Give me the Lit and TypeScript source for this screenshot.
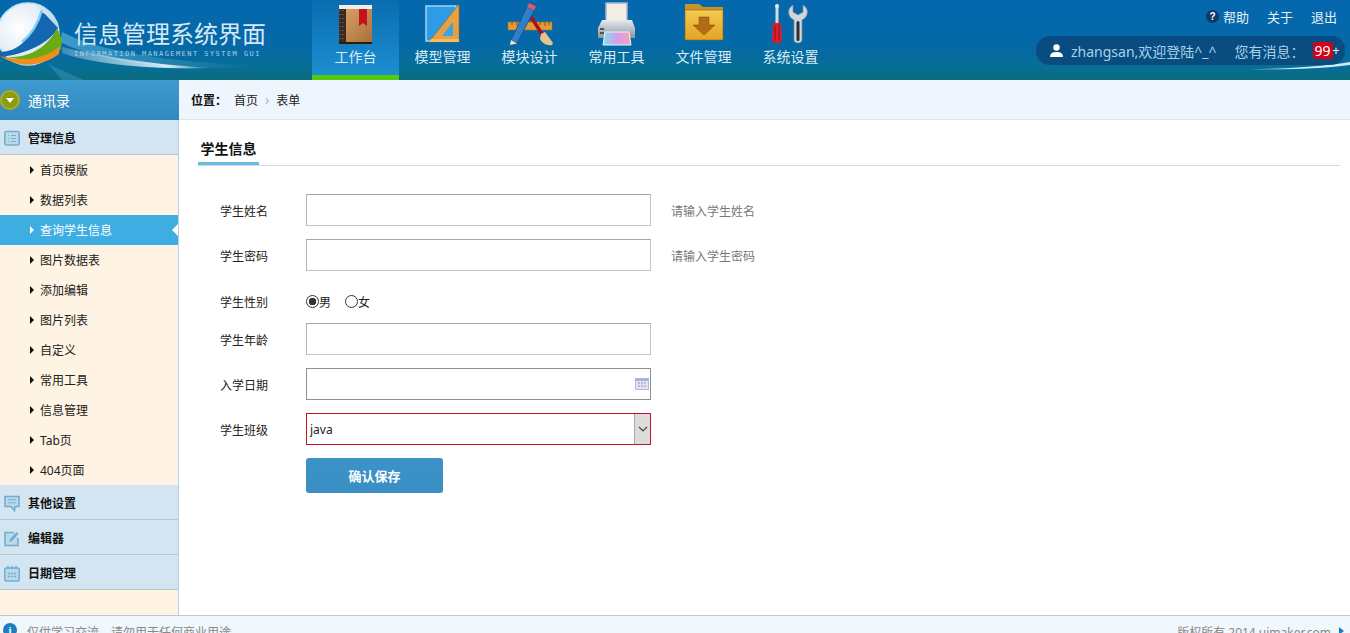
import { LitElement, html, css, svg } from "lit";
import { customElement } from "lit/decorators.js";

const navIcons = [
  svg`<svg viewBox="0 0 40 44" width="40" height="44"><defs><linearGradient id="bk" x1="0" x2="1" y1="0" y2="1"><stop offset="0" stop-color="#e0a86c"/><stop offset="1" stop-color="#a96f3a"/></linearGradient></defs><rect x="3" y="3" width="33" height="37" fill="url(#bk)"/><rect x="3" y="4" width="7" height="37" fill="#3a2a20"/><path d="M4 8v30M7 8v30" stroke="#8a7560" stroke-dasharray="1 3"/><rect x="3" y="3" width="33" height="4" fill="#f3efe8"/><path d="M23 7h8v17l-4-3-4 3z" fill="#c1121f"/><rect x="3" y="40" width="33" height="2" fill="#2b1c12"/></svg>`,
  svg`<svg viewBox="0 0 40 44" width="40" height="44"><rect x="3" y="4" width="30" height="35" fill="#2e9be6" stroke="#9fd5f5" stroke-width="1.500"/><path d="M36 2v38H6z" fill="#e7a13f" stroke="#8f6a2a" stroke-width=".6"/><path d="M30 20v14H19z" fill="#39a3e8"/><path d="M36 40H6l2-3h28z" fill="#f3bd62"/></svg>`,
  svg`<svg viewBox="0 0 48 44" width="48" height="44"><rect x="2" y="20" width="44" height="8" fill="#e39a36" stroke="#a76f22" stroke-width=".6"/><path d="M6 20v3M11 20v4M16 20v3M34 20v3M39 20v4M43 20v3" stroke="#7a5216"/><path d="M25 7 47 7" stroke="none"/><path d="M25 15l13 20" stroke="#a8101b" stroke-width="3.500"/><path d="M35 32l4-2 8 11-1 2c-5 1-10-2-12-6z" fill="#e7c48d"/><path d="M5 38 21 5l7 3.500-17 33z" fill="#2f80c8" stroke="#15507f" stroke-width=".8"/><path d="M21 5l2-4 7 3.500-2 4z" fill="#e2596d"/><path d="M5 38l-1 5 7-1.500z" fill="#f2e3c8"/></svg>`,
  svg`<svg viewBox="0 0 44 44" width="44" height="44"><defs><linearGradient id="pr"><stop offset="0" stop-color="#7fe3e8"/><stop offset=".5" stop-color="#d79cf0"/><stop offset="1" stop-color="#f5a5b0"/></linearGradient><linearGradient id="pb" x1="0" x2="0" y1="0" y2="1"><stop offset="0" stop-color="#e7eaee"/><stop offset=".55" stop-color="#b4bac2"/><stop offset="1" stop-color="#8d949e"/></linearGradient></defs><rect x="11" y="1" width="21" height="20" fill="#f4ede4" stroke="#aab4c2" stroke-width="1.500"/><path d="M7 18h30l3 8v10H3V26z" fill="url(#pb)"/><rect x="5" y="26" width="4" height="2" fill="#555"/><rect x="5" y="30" width="4" height="2" fill="#555"/><path d="M10 30h24l2 13H8z" fill="url(#pr)" stroke="#e6f6fb"/></svg>`,
  svg`<svg viewBox="0 0 42 40" width="42" height="40"><defs><linearGradient id="fd" x1="0" x2="0" y1="0" y2="1"><stop offset="0" stop-color="#f4c94f"/><stop offset="1" stop-color="#e2a423"/></linearGradient></defs><path d="M2 2h14l4 3h20v33H2z" fill="#c99427"/><rect x="2" y="8" width="38" height="30" fill="url(#fd)" stroke="#8a6518" stroke-width=".6"/><path d="M16 15h10v8h6L21 33 10 23h6z" fill="#b56a17" stroke="#7d4a10" stroke-width=".5"/></svg>`,
  svg`<svg viewBox="0 0 40 44" width="40" height="44"><rect x="4.500" y="4" width="3" height="17" fill="#d5dade"/><circle cx="6" cy="4" r="2" fill="#e6ebef"/><path d="M2 21h8l1 18-2 2H3l-2-2z" fill="#d9202c"/><path d="M4 23v16M8 23v16" stroke="#8e0f17"/><path d="M22 3c-6 3-6 12 1 15v20c0 4 8 4 8 0V18c7-3 7-12 1-15v7l-5 3-5-3z" fill="#cfd6dc" stroke="#7c8790" stroke-width=".7"/><rect x="25.500" y="19" width="3" height="20" rx="1.500" fill="#2d2f33"/></svg>`,
];
const navLabels = ["工作台", "模型管理", "模块设计", "常用工具", "文件管理", "系统设置"];
const items = ["首页模版", "数据列表", "查询学生信息", "图片数据表", "添加编辑", "图片列表", "自定义", "常用工具", "信息管理", "Tab页", "404页面"];

const listIcon = svg`<svg viewBox="0 0 16 16" width="16" height="16" fill="none" stroke="#6fb0d2"><rect x=".8" y="1.500" width="14.400" height="13.500" rx="1.500" stroke-width="1.600" fill="#bcd9ea"/><path d="M4 5.500h1M7 5.500h5M4 8.500h1M7 8.500h5M4 11.500h1M7 11.500h5" stroke-width="1.200"/></svg>`;
const chatIcon = svg`<svg viewBox="0 0 16 17" width="16" height="17" fill="#bcd9ea" stroke="#6fb0d2" stroke-width="1.600"><path d="M1 1.500h14v10h-4l-.5 4-3.500-4H1z"/><path d="M4 4.800h8M4 7.800h8" stroke-width="1.100"/></svg>`;
const editIcon = svg`<svg viewBox="0 0 16 17" width="16" height="17" fill="#bcd9ea" stroke="#6fb0d2" stroke-width="1.600"><path d="M10 2.500H1v13h13V8"/><path d="M5 12l1-3 6.500-7 2 2-6.500 7z" fill="#6fb0d2" stroke="none"/></svg>`;
const calIcon = svg`<svg viewBox="0 0 16 17" width="16" height="17" fill="#bcd9ea" stroke="#6fb0d2" stroke-width="1.500"><rect x=".8" y="3" width="14.400" height="13" rx="1.500"/><path d="M4 .8v3.500M8 .8v3.500M12 .8v3.500" stroke-width="1.300"/><path d="M4 8.500h2M7 8.500h2M10 8.500h2M4 11.500h2M7 11.500h2M10 11.500h2" stroke-width="1.400"/></svg>`;

@customElement("app-root")
export class AppRoot extends LitElement {
  static styles = css`
    :host { display: block; height: 633px; overflow: hidden; font: 12px "Noto Sans", "Noto Sans CJK SC", sans-serif; color: #222; background: #fff; }
    .header { height: 80px; display: flex; position: relative; overflow: hidden; background: linear-gradient(#0568ae 0, #0568a8 55%, #076e95 85%, #0a6c7e 100%); }
    .logo { width: 312px; flex: none; position: relative; }
    .logo-art { position: absolute; left: 0; top: 0; }
    .logo-text { position: relative; padding: 19px 0 0 74px; color: #d6e8f4; }
    .logo-title { font-size: 24px; line-height: 30px; white-space: nowrap; }
    .logo-sub { font: 7px/8px "DejaVu Sans Mono", monospace; letter-spacing: 1.450px; color: #a8d0e6; white-space: nowrap; margin-top: 1px; }
    .nav { display: flex; }
    .nav-item { width: 87px; height: 80px; box-sizing: border-box; display: flex; flex-direction: column; align-items: center; color: #d9ecf7; font-size: 14px; line-height: 20px; }
    .nav-item.active { background: linear-gradient(#0a6cb0, #1b8fd0); border-bottom: 5px solid #54c90e; }
    .nav-icon { height: 47px; display: flex; align-items: flex-start; padding-top: 2px; box-sizing: border-box; }
    .right { margin-left: auto; display: flex; flex-direction: column; align-items: flex-end; padding: 7px 5px 0 0; position: relative; }
    .links { display: flex; align-items: center; height: 18px; color: #e8f3fa; font-size: 13px; padding-right: 8px; gap: 18px; }
    .help { display: flex; align-items: center; gap: 4px; }
    .q { width: 13px; height: 13px; border-radius: 50%; background: #0c3b66; color: #fff; font: bold 10px/13px "Liberation Sans", sans-serif; text-align: center; }
    .pill { margin-top: 11px; width: 309px; height: 29px; box-sizing: border-box; border-radius: 14px; background: rgba(10, 65, 115, .72); display: flex; align-items: center; padding-left: 14px; color: #a7d2e8; font-size: 14px; white-space: nowrap; }
    .pill svg { margin-right: 8px; flex: none; }
    .msg { margin-left: 18px; font-size: 14px; width: 78px; flex: none; }
    .badge { background: #d0021b; color: #fff; width: 20px; height: 17px; border-radius: 3px; text-align: center; line-height: 17px; font-size: 14px; flex: none; }
    .plus { color: #fff; font-size: 12px; }
    .glow { position: absolute; right: 0; top: 60px; }

    .body { display: flex; height: 535px; }
    .side { width: 179px; flex: none; box-sizing: border-box; background: #fff4e3; border-right: 1px solid #b9cfdc; }
    .top { height: 40px; display: flex; align-items: center; gap: 8px; color: #fff; font-size: 14px; background: linear-gradient(#3e9bd0, #3089bd); margin-right: -1px; }
    .dot { width: 20px; height: 20px; border-radius: 50%; background: #8f9a14; display: flex; align-items: center; justify-content: center; box-shadow: inset 0 0 0 2px #a7ad2c; }
    .dot i { width: 0; height: 0; border: 4px solid transparent; border-top: 5px solid #fff; border-bottom: 0; }
    .group { height: 35px; box-sizing: border-box; display: flex; align-items: center; gap: 8px; padding: 2px 0 0 4px; background: #d2e5f1; border-bottom: 1px solid #b3c7d4; font-weight: 700; color: #111; }
    .item { height: 30px; display: flex; align-items: center; padding-left: 30px; gap: 6px; color: #222; position: relative; }
    .item i { width: 0; height: 0; border: 4px solid transparent; border-left: 4px solid #111; border-right: 0; }
    .item.on { background: #3eaee2; color: #fff; }
    .item.on i { border-left-color: #fff; }
    .item.on::after { content: ""; position: absolute; right: 0; top: 9px; border: 6px solid transparent; border-right: 6px solid #fff; border-left: 0; }

    .main { flex: 1; min-width: 0; }
    .crumb { height: 40px; box-sizing: border-box; background: #eef5fc; border-bottom: 1px solid #dfe5ea; display: flex; align-items: center; padding-left: 12px; color: #222; }
    .crumb b { width: 43px; color: #111; }
    .crumb span { color: #aab6c0; margin: 0 7px; font-size: 14px; }
    .content { padding: 19px 10px 0 19px; }
    .title-bar { border-bottom: 1px solid #d8d8d8; height: 26px; }
    .title { display: inline-block; width: 61px; height: 26px; box-sizing: border-box; border-bottom: 3px solid #66bfdf; text-align: center; font-weight: 700; font-size: 14px; color: #111; line-height: 20px; }
    .form { padding: 28px 0 0 22px; display: flex; flex-direction: column; }
    .row { display: flex; align-items: center; height: 32px; margin-bottom: 13px; }
    .row.radios { height: 26px; padding-top: 8px; box-sizing: border-box; }
    .row label.k { width: 86px; flex: none; color: #222; padding-top: 2px; }
    .field { position: relative; width: 345px; height: 32px; flex: none; }
    input.txt, select { width: 100%; height: 100%; box-sizing: border-box; margin: 0; background: #fff; border: 1px solid #c4c4c4; border-top-color: #a6a6a6; border-left-color: #b5b5b5; outline: none; font: inherit; }
    input.dark { border: 1px solid #909090; }
    select { appearance: none; border: 1px solid #c8102e; padding-left: 3px; color: #222; border-radius: 0; }
    .hint { margin-left: 20px; color: #777; padding-top: 1px; }
    .cal { position: absolute; right: 2px; top: 9px; }
    .arrow { position: absolute; right: 1px; top: 1px; width: 16px; height: 30px; box-sizing: border-box; background: #dcdcdc; border-left: 1px solid #a8a8a8; display: flex; align-items: center; justify-content: center; pointer-events: none; }
    .radio { display: flex; align-items: center; margin-right: 14px; color: #222; }
    .radio input { appearance: none; margin: 0; width: 13px; height: 13px; border: 1px solid #333; border-radius: 50%; background: #fff; }
    .radio input:checked { background: radial-gradient(circle, #333 0 3.500px, #fff 4px); }
    .radio span { padding-top: 2px; }
    .btn { margin-left: 86px; width: 137px; height: 35px; border: 0; border-radius: 3px; background: linear-gradient(#3b93c9, #3a8ec3); color: #fff; font: 700 13px "Noto Sans CJK SC", sans-serif; padding: 0; }

    .foot { height: 30px; box-sizing: border-box; background: #f0f7fd; border-top: 1px solid #bcc8d2; display: flex; padding: 7px 6px 0 3px; color: #888; }
    .foot .info { width: 14px; height: 14px; border-radius: 50%; background: #1a7fc1; color: #fff; font: bold 11px/14px "Liberation Serif", serif; text-align: center; margin-right: 10px; }
    .foot .r { margin-left: auto; display: flex; gap: 8px; }
    .foot .r i { width: 0; height: 0; margin-top: 4px; border: 4px solid transparent; border-left: 5px solid #1a7fc1; border-right: 0; }
  `;

  render() {
    return html`
      <div class="header">
        <div class="logo">
          <svg class="logo-art" width="312" height="80" viewBox="0 0 312 80">
            <defs>
              <radialGradient id="gl" cx=".35" cy=".4" r=".7"><stop offset="0" stop-color="#fff"/><stop offset=".6" stop-color="#e4edf5"/><stop offset="1" stop-color="#9fcbe6"/></radialGradient>
              <linearGradient id="sw" x1="0" x2="1"><stop offset="0" stop-color="#4ea6d4" stop-opacity=".8"/><stop offset="1" stop-color="#4ea6d4" stop-opacity="0"/></linearGradient>
              <linearGradient id="sw2" x1="0" x2="1"><stop offset="0" stop-color="#d8f0fb" stop-opacity=".25"/><stop offset=".7" stop-color="#eaf7fd" stop-opacity=".9"/><stop offset="1" stop-color="#fff" stop-opacity="0"/></linearGradient>
            </defs>
            <path d="M62 32C100 52 170 62 260 66 170 72 100 62 60 42z" fill="url(#sw)"/>
            <path d="M62 47c50 12 110 19 150 21-60 2-120-4-150-15z" fill="url(#sw2)"/>
            <path d="M48 64l36 16H62z" fill="#3d97c8" opacity=".45"/>
            <circle cx="28" cy="34" r="31" fill="url(#gl)" stroke="#bfe2f3" stroke-width="1.500"/>
            <path d="M0 52c18 0 32-14 41-40l4 2 13 14c-8 14-30 26-58 29z" fill="#1466b0"/>
            <path d="M42 10c-4 14-10 24-20 32" stroke="#7dd0f2" stroke-width="2.500" fill="none"/>
            <path d="M8 57c22 1 40-10 49-29l5 12-1 9c-16 12-34 13-53 8z" fill="#6aaa14"/>
            <path d="M0 56c20 6 44 4 60-10l-1 8c-14 10-28 12-40 10-8-2-14-5-19-8z" fill="#ef8e1c"/>
          </svg>
          <div class="logo-text">
            <div class="logo-title">信息管理系统界面</div>
            <div class="logo-sub">INFORMATION MANAGEMENT SYSTEM GUI</div>
          </div>
        </div>
        <div class="nav">
          ${navLabels.map((l, i) => html`
            <div class="nav-item ${i === 0 ? "active" : ""}">
              <div class="nav-icon">${navIcons[i]}</div>
              <div>${l}</div>
            </div>`)}
        </div>
        <svg class="glow" width="100" height="12" viewBox="0 0 100 12"><path d="M0 9c30 0 70-2 100-7v3C70 9 30 10 0 9z" fill="#cfeaf7"/></svg>
        <div class="right">
          <div class="links">
            <div class="help"><span class="q">?</span><span>帮助</span></div>
            <span>关于</span>
            <span>退出</span>
          </div>
          <div class="pill">
            <svg width="13" height="13" viewBox="0 0 13 13" fill="#fff"><circle cx="6.500" cy="3.500" r="3.200"/><path d="M0 13c0-4 3-5 6.500-5S13 9 13 13z"/></svg>
            <span>zhangsan,欢迎登陆^_^</span>
            <span class="msg">您有消息：</span>
            <span class="badge">99</span><span class="plus">+</span>
          </div>
        </div>
      </div>
      <div class="body">
        <div class="side">
          <div class="top"><span class="dot"><i></i></span>通讯录</div>
          <div class="group">${listIcon}管理信息</div>
          ${items.map((t, i) => html`<div class="item ${i === 2 ? "on" : ""}"><i></i>${t}</div>`)}
          <div class="group">${chatIcon}其他设置</div>
          <div class="group">${editIcon}编辑器</div>
          <div class="group">${calIcon}日期管理</div>
        </div>
        <div class="main">
          <div class="crumb"><b>位置：</b>首页<span>›</span>表单</div>
          <div class="content">
            <div class="title-bar"><div class="title">学生信息</div></div>
            <div class="form">
              <div class="row"><label class="k">学生姓名</label><div class="field"><input class="txt"></div><span class="hint">请输入学生姓名</span></div>
              <div class="row"><label class="k">学生密码</label><div class="field"><input class="txt" type="password"></div><span class="hint">请输入学生密码</span></div>
              <div class="row radios"><label class="k">学生性别</label>
                <label class="radio"><input type="radio" name="s" checked><span>男</span></label>
                <label class="radio"><input type="radio" name="s"><span>女</span></label>
              </div>
              <div class="row"><label class="k">学生年龄</label><div class="field"><input class="txt"></div></div>
              <div class="row"><label class="k">入学日期</label><div class="field"><input class="txt dark">
                <svg class="cal" width="14" height="13" viewBox="0 0 14 13"><rect x=".5" y="1.500" width="13" height="11" fill="#dfe3f2" stroke="#b4bbd8"/><rect x=".5" y="1.500" width="13" height="2.500" fill="#aab3d6"/><path d="M3 6h2M6 6h2M9 6h2M3 9h2M6 9h2M9 9h2" stroke="#8f98c4"/></svg>
              </div></div>
              <div class="row"><label class="k">学生班级</label><div class="field"><select><option>java</option></select>
                <span class="arrow"><svg width="10" height="6" viewBox="0 0 10 6" fill="none" stroke="#444" stroke-width="1.200"><path d="M1 1l4 4 4-4"/></svg></span>
              </div></div>
              <button class="btn">确认保存</button>
            </div>
          </div>
        </div>
      </div>
      <div class="foot">
        <span class="info">i</span><span>仅供学习交流，请勿用于任何商业用途</span>
        <span class="r"><span>版权所有 2014 uimaker.com</span><i></i></span>
      </div>
    `;
  }
}
